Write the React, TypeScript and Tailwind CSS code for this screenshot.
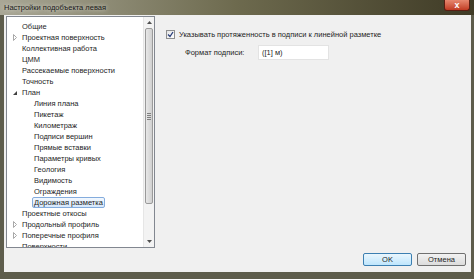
import React from "react"

interface Node {
  label: string
  level: number
  arrow?: "closed" | "open"
  selected?: boolean
}

const nodes: Node[] = [
  { label: "Общие", level: 0 },
  { label: "Проектная поверхность", level: 0, arrow: "closed" },
  { label: "Коллективная работа", level: 0 },
  { label: "ЦММ", level: 0 },
  { label: "Рассекаемые поверхности", level: 0 },
  { label: "Точность", level: 0 },
  { label: "План", level: 0, arrow: "open" },
  { label: "Линия плана", level: 1 },
  { label: "Пикетаж", level: 1 },
  { label: "Километраж", level: 1 },
  { label: "Подписи вершин", level: 1 },
  { label: "Прямые вставки", level: 1 },
  { label: "Параметры кривых", level: 1 },
  { label: "Геология", level: 1 },
  { label: "Видимость", level: 1 },
  { label: "Ограждения", level: 1 },
  { label: "Дорожная разметка", level: 1, selected: true },
  { label: "Проектные откосы", level: 0 },
  { label: "Продольный профиль", level: 0, arrow: "closed" },
  { label: "Поперечные профиля", level: 0, arrow: "closed" },
  { label: "Поверхности", level: 0 },
]

function Arrow({ kind }: { kind: "closed" | "open" }) {
  if (kind === "open") {
    return (
      <svg width="6" height="6" viewBox="0 0 6 6">
        <path d="M5 1 L5 5 L1 5 Z" fill="#404040" />
      </svg>
    )
  }
  return (
    <svg width="6" height="7" viewBox="0 0 6 7">
      <path d="M1.5 0.5 L4.5 3.5 L1.5 6.5 Z" fill="none" stroke="#a8a8a8" strokeWidth="1" />
    </svg>
  )
}

function Scrollbar() {
  return (
    <div className="flex w-[11px] flex-col border-l border-[#e6e6e6] bg-[#f3f3f3]">
      <div className="flex h-[11px] items-center justify-center">
        <svg width="5" height="3" viewBox="0 0 5 3">
          <path d="M0 3 L2.5 0 L5 3 Z" fill="#505050" />
        </svg>
      </div>
      <div className="mx-[1px] flex h-[176px] items-center justify-center rounded-[2px] border border-[#9a9a9a] bg-gradient-to-r from-[#e8e8e8] to-[#d0d0d0]">
        <div className="flex flex-col gap-[1px]">
          <div className="h-px w-[4px] bg-[#808080]" />
          <div className="h-px w-[4px] bg-[#808080]" />
          <div className="h-px w-[4px] bg-[#808080]" />
          <div className="h-px w-[4px] bg-[#808080]" />
        </div>
      </div>
      <div className="flex-1" />
      <div className="flex h-[11px] items-center justify-center">
        <svg width="5" height="3" viewBox="0 0 5 3">
          <path d="M0 0 L2.5 3 L5 0 Z" fill="#505050" />
        </svg>
      </div>
    </div>
  )
}

export default function App() {
  return (
    <div
      className="flex h-[279px] w-[474px] flex-col overflow-hidden bg-[#5e5d4c] text-[7.5px] text-[#1e1e1e]"
      style={{ fontFamily: "'Liberation Sans', Arial, sans-serif" }}
    >
      {/* Title bar */}
      <div className="relative flex h-[15px] items-center bg-gradient-to-r from-[#a9a796] via-[#6d6a4e] to-[#3f3b26] pl-[4px]">
        <span className="text-[7.5px] text-[#1a1a1a] [text-shadow:0_0_4px_#e8e8e0]">Настройки подобъекта левая</span>
        <div className="absolute right-[4px] top-0 flex h-[11px] w-[26px] items-center justify-center rounded-b-[3px] border border-t-0 border-[#5a1d12] bg-gradient-to-b from-[#e6876f] to-[#c13a22]">
          <span className="text-[9px] leading-none font-bold text-white">x</span>
        </div>
      </div>

      {/* Client area */}
      <div className="mb-[7px] ml-[4px] mr-[3px] flex flex-1 flex-col bg-[#f0f0f0]">
        <div className="flex flex-1 pt-[1px]">
          {/* Tree */}
          <div className="ml-[2px] flex h-[232px] w-[149px] overflow-hidden border border-[#828790] bg-white">
            <div className="flex flex-1 flex-col overflow-hidden pt-[4px]">
              {nodes.map((n, i) => (
                <div key={i} className="flex h-[11px] shrink-0 items-center">
                  <div className="flex w-[13px] shrink-0 items-center justify-center pl-[3px]">
                    {n.arrow && <Arrow kind={n.arrow} />}
                  </div>
                  <div className={n.level === 1 ? "w-[12px] shrink-0" : "w-0"} />
                  <span
                    className={
                      n.selected
                        ? "whitespace-nowrap rounded-[2px] border border-[#84acdd] bg-gradient-to-b from-[#f2f8fe] to-[#d6e8fc] px-[1px] leading-[9px]"
                        : "whitespace-nowrap border border-transparent px-[1px] leading-[9px]"
                    }
                  >
                    {n.label}
                  </span>
                </div>
              ))}
            </div>
            <Scrollbar />
          </div>

          {/* Settings */}
          <div className="flex flex-1 flex-col pl-[11px] pt-[13px]">
            <div className="flex items-center gap-[4px]">
              <div className="flex h-[9px] w-[9px] items-center justify-center border border-[#8e8f8f] bg-gradient-to-br from-[#e4e4e4] to-[#ffffff]">
                <svg width="7" height="7" viewBox="0 0 7 7">
                  <path d="M1 3.5 L3 5.5 L6 1" fill="none" stroke="#2a3f7a" strokeWidth="1.3" />
                </svg>
              </div>
              <span className="whitespace-nowrap">Указывать протяженность в подписи к линейной разметке</span>
            </div>
            <div className="mt-[5px] flex items-center pl-[19px]">
              <span className="w-[73px] whitespace-nowrap">Формат подписи:</span>
              <div className="flex h-[15px] w-[71px] items-center border border-[#e3e3e3] bg-white px-[3px]">
                ([1] м)
              </div>
            </div>
          </div>
        </div>

        {/* Buttons */}
        <div className="flex justify-end gap-[5px] pb-[6px] pr-[5px] pt-[5px]">
          <button className="h-[13px] w-[49px] rounded-[2px] border border-[#3c7fb1] bg-gradient-to-b from-[#eaf6fd] to-[#bee6fd] text-[7.5px] leading-none">
            OK
          </button>
          <button className="h-[13px] w-[49px] rounded-[2px] border border-[#707070] bg-gradient-to-b from-[#f2f2f2] to-[#dcdcdc] text-[7.5px] leading-none">
            Отмена
          </button>
        </div>
      </div>
    </div>
  )
}
